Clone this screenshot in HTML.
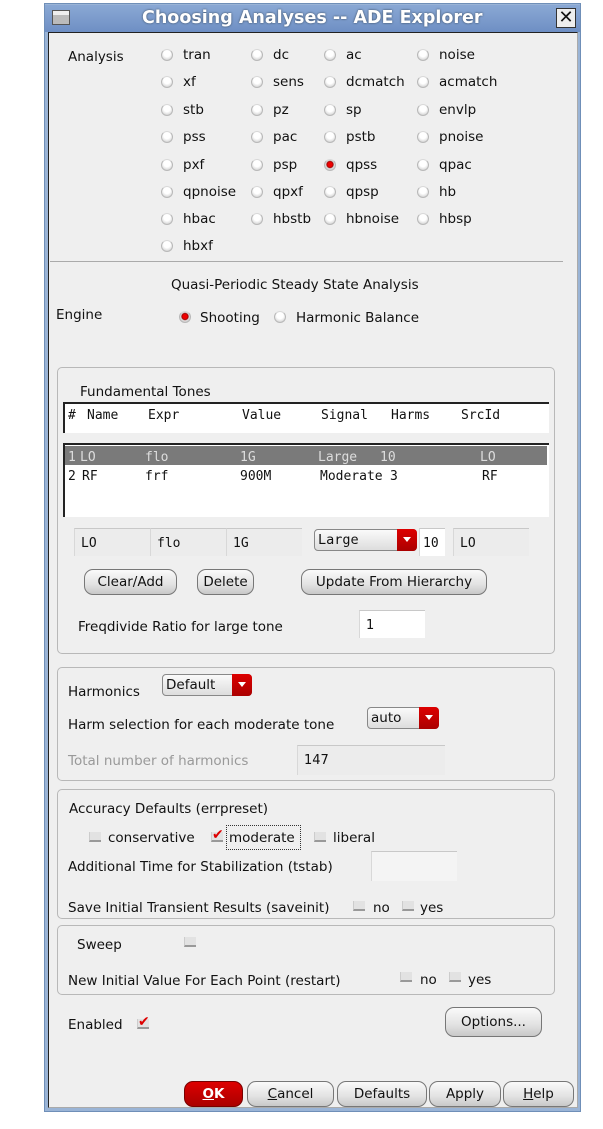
<!DOCTYPE html>
<html><head><meta charset="utf-8"><style>
*{margin:0;padding:0;box-sizing:border-box}
body{width:603px;height:1129px;background:#fff;position:relative;overflow:hidden;font-family:"DejaVu Sans","Liberation Sans",sans-serif;font-size:13.5px;color:#111}
.a{position:absolute;white-space:nowrap;line-height:19px}
.win{position:absolute;left:44px;top:3px;width:537px;height:1109px;background:#9ab4d6;border:1px solid #6f8fb8}
.title{position:absolute;left:45px;top:5px;width:535px;height:27px;background:linear-gradient(#8aa8d4,#6e8fc4);}
.panel{position:absolute;left:48px;top:32px;width:530px;height:1076px;background:#efefef;border:1px solid #222;border-right:1px solid #aaa;border-bottom:1px solid #aaa}
.rd{position:absolute;width:12px;height:12px;border-radius:50%;border:1px solid #b8b8b8;border-top-color:#d8d8d8;background:radial-gradient(circle at 50% 35%,#fff 0 40%,#e0e0e0 70%,#c4c4c4 100%)}
.rd.on{background:radial-gradient(circle at 50% 45%,#e00 0 30%,#900 42%,#ddd 55%,#c4c4c4 100%)}
.box{position:absolute;border:1px solid #b8b8b8;border-radius:5px}
.btn{position:absolute;height:26px;border:1px solid #777;border-radius:9px;background:linear-gradient(#fafafa,#e2e2e2 60%,#c8c8c8);text-align:center;line-height:24px;font-size:13.5px}
.fld{position:absolute;height:28px;background:#ececec;border-top:1px solid #c8c8c8;border-left:1px solid #d8d8d8;font-size:13px;line-height:30px;padding-left:6px}
.mono{font-family:"DejaVu Sans Mono","Liberation Mono",monospace;font-size:13px}
.m{position:absolute;white-space:nowrap;font-family:"DejaVu Sans Mono","Liberation Mono",monospace;font-size:13px;line-height:16px}
.dd{position:absolute;height:22px;border:1px solid #888;border-radius:4px;background:linear-gradient(#fafafa,#ddd);line-height:20px;padding-left:3px;font-size:13.5px}
.dd i{position:absolute;right:-1px;top:-1px;width:20px;height:22px;background:linear-gradient(#d00,#a00);border-radius:0 4px 4px 0}
.dd i:after{content:"";position:absolute;left:6px;top:8px;border-left:4px solid transparent;border-right:4px solid transparent;border-top:5px solid #fff}
.cb{position:absolute;width:12px;height:10px;border-bottom:2px solid #999;border-left:1px solid #ccc;background:#e2e2e2}
.ck:after{content:"✔";position:absolute;left:0;top:-4px;color:#d00;font-size:14px;line-height:14px}
</style></head><body>
<div class="win"></div>
<div class="title"></div>
<div class="a" style="left:52px;top:10px;width:18px;height:15px;border:1px solid #555;background:linear-gradient(#eee 30%,#bbb 30%)"></div>
<div class="a" style="left:142px;top:9px;font-size:17.5px;font-weight:bold;color:#fff;text-shadow:0 0 2px #345">Choosing Analyses -- ADE Explorer</div>
<div class="a" style="left:556px;top:8px;width:20px;height:20px;background:#eee;border:1px solid #333;text-align:center;font-size:18px;line-height:18px;font-weight:bold">✕</div>
<div class="panel"></div>

<div class="a" style="left:68px;top:48px">Analysis</div>
<div class="rd" style="left:161px;top:49px"></div><div class="a" style="left:183px;top:46px">tran</div>
<div class="rd" style="left:251px;top:49px"></div><div class="a" style="left:273px;top:46px">dc</div>
<div class="rd" style="left:324px;top:49px"></div><div class="a" style="left:346px;top:46px">ac</div>
<div class="rd" style="left:417px;top:49px"></div><div class="a" style="left:439px;top:46px">noise</div>
<div class="rd" style="left:161px;top:76px"></div><div class="a" style="left:183px;top:73px">xf</div>
<div class="rd" style="left:251px;top:76px"></div><div class="a" style="left:273px;top:73px">sens</div>
<div class="rd" style="left:324px;top:76px"></div><div class="a" style="left:346px;top:73px">dcmatch</div>
<div class="rd" style="left:417px;top:76px"></div><div class="a" style="left:439px;top:73px">acmatch</div>
<div class="rd" style="left:161px;top:104px"></div><div class="a" style="left:183px;top:101px">stb</div>
<div class="rd" style="left:251px;top:104px"></div><div class="a" style="left:273px;top:101px">pz</div>
<div class="rd" style="left:324px;top:104px"></div><div class="a" style="left:346px;top:101px">sp</div>
<div class="rd" style="left:417px;top:104px"></div><div class="a" style="left:439px;top:101px">envlp</div>
<div class="rd" style="left:161px;top:131px"></div><div class="a" style="left:183px;top:128px">pss</div>
<div class="rd" style="left:251px;top:131px"></div><div class="a" style="left:273px;top:128px">pac</div>
<div class="rd" style="left:324px;top:131px"></div><div class="a" style="left:346px;top:128px">pstb</div>
<div class="rd" style="left:417px;top:131px"></div><div class="a" style="left:439px;top:128px">pnoise</div>
<div class="rd" style="left:161px;top:159px"></div><div class="a" style="left:183px;top:156px">pxf</div>
<div class="rd" style="left:251px;top:159px"></div><div class="a" style="left:273px;top:156px">psp</div>
<div class="rd on" style="left:324px;top:159px"></div><div class="a" style="left:346px;top:156px">qpss</div>
<div class="rd" style="left:417px;top:159px"></div><div class="a" style="left:439px;top:156px">qpac</div>
<div class="rd" style="left:161px;top:186px"></div><div class="a" style="left:183px;top:183px">qpnoise</div>
<div class="rd" style="left:251px;top:186px"></div><div class="a" style="left:273px;top:183px">qpxf</div>
<div class="rd" style="left:324px;top:186px"></div><div class="a" style="left:346px;top:183px">qpsp</div>
<div class="rd" style="left:417px;top:186px"></div><div class="a" style="left:439px;top:183px">hb</div>
<div class="rd" style="left:161px;top:213px"></div><div class="a" style="left:183px;top:210px">hbac</div>
<div class="rd" style="left:251px;top:213px"></div><div class="a" style="left:273px;top:210px">hbstb</div>
<div class="rd" style="left:324px;top:213px"></div><div class="a" style="left:346px;top:210px">hbnoise</div>
<div class="rd" style="left:417px;top:213px"></div><div class="a" style="left:439px;top:210px">hbsp</div>
<div class="rd" style="left:161px;top:240px"></div><div class="a" style="left:183px;top:237px">hbxf</div>

<div class="a" style="left:50px;top:261px;width:513px;height:1px;background:#aaa"></div>
<div class="a" style="left:171px;top:276px">Quasi-Periodic Steady State Analysis</div>
<div class="a" style="left:56px;top:306px">Engine</div>
<div class="rd on" style="left:179px;top:311px"></div><div class="a" style="left:200px;top:309px">Shooting</div>
<div class="rd" style="left:274px;top:311px"></div><div class="a" style="left:296px;top:309px">Harmonic Balance</div>

<div class="box" style="left:57px;top:367px;width:498px;height:287px"></div>
<div class="a" style="left:80px;top:383px">Fundamental Tones</div>
<div class="a" style="left:63px;top:402px;width:486px;height:31px;background:#fff;border-top:2px solid #222;border-left:2px solid #222"></div>
<div class="m" style="left:68px;top:408px">#</div><div class="m" style="left:87px;top:408px">Name</div><div class="m" style="left:148px;top:408px">Expr</div><div class="m" style="left:242px;top:408px">Value</div><div class="m" style="left:321px;top:408px">Signal</div><div class="m" style="left:391px;top:408px">Harms</div><div class="m" style="left:461px;top:408px">SrcId</div>
<div class="a" style="left:63px;top:443px;width:486px;height:74px;background:#fff;border-top:2px solid #222;border-left:2px solid #222"></div>
<div class="a" style="left:65px;top:446px;width:482px;height:19px;background:#7a7a7a"></div>
<div style="color:#ddd"><div class="m" style="left:68px;top:450px">1</div><div class="m" style="left:80px;top:450px">LO</div><div class="m" style="left:145px;top:450px">flo</div><div class="m" style="left:240px;top:450px">1G</div><div class="m" style="left:318px;top:450px">Large</div><div class="m" style="left:380px;top:450px">10</div><div class="m" style="left:480px;top:450px">LO</div></div>
<div class="m" style="left:68px;top:469px">2</div><div class="m" style="left:82px;top:469px">RF</div><div class="m" style="left:145px;top:469px">frf</div><div class="m" style="left:240px;top:469px">900M</div><div class="m" style="left:320px;top:469px">Moderate</div><div class="m" style="left:390px;top:469px">3</div><div class="m" style="left:482px;top:469px">RF</div>
<div class="fld mono" style="left:74px;top:528px;width:76px">LO</div>
<div class="fld mono" style="left:150px;top:528px;width:76px">flo</div>
<div class="fld mono" style="left:226px;top:528px;width:76px">1G</div>
<div class="dd mono" style="left:314px;top:529px;width:103px">Large<i></i></div>
<div class="fld mono" style="left:419px;top:528px;width:26px;background:#fff;padding-left:3px">10</div>
<div class="fld mono" style="left:453px;top:528px;width:76px">LO</div>
<div class="btn" style="left:84px;top:569px;width:93px">Clear/Add</div>
<div class="btn" style="left:197px;top:569px;width:57px">Delete</div>
<div class="btn" style="left:301px;top:569px;width:186px">Update From Hierarchy</div>
<div class="a" style="left:78px;top:618px">Freqdivide Ratio for large tone</div>
<div class="fld" style="left:359px;top:610px;width:66px;background:#fff">1</div>

<div class="box" style="left:57px;top:667px;width:498px;height:114px"></div>
<div class="a" style="left:68px;top:683px">Harmonics</div>
<div class="dd" style="left:162px;top:674px;width:90px">Default<i></i></div>
<div class="a" style="left:68px;top:716px">Harm selection for each moderate tone</div>
<div class="dd" style="left:367px;top:707px;width:72px">auto<i></i></div>
<div class="a" style="left:68px;top:752px;color:#999">Total number of harmonics</div>
<div class="fld" style="left:297px;top:745px;width:148px;height:30px">147</div>

<div class="box" style="left:57px;top:789px;width:498px;height:130px"></div>
<div class="a" style="left:69px;top:800px">Accuracy Defaults (errpreset)</div>
<div class="cb" style="left:89px;top:832px"></div><div class="a" style="left:108px;top:829px">conservative</div>
<div class="cb ck" style="left:211px;top:832px"></div>
<div class="a" style="left:226px;top:825px;width:75px;height:25px;border:1px dotted #333"></div>
<div class="a" style="left:229px;top:829px">moderate</div>
<div class="cb" style="left:314px;top:832px"></div><div class="a" style="left:333px;top:829px">liberal</div>
<div class="a" style="left:68px;top:858px">Additional Time for Stabilization (tstab)</div>
<div class="fld" style="left:371px;top:851px;width:86px;height:30px;background:#f4f4f4"></div>
<div class="a" style="left:68px;top:899px">Save Initial Transient Results (saveinit)</div>
<div class="cb" style="left:353px;top:901px"></div><div class="a" style="left:373px;top:899px">no</div>
<div class="cb" style="left:402px;top:901px"></div><div class="a" style="left:420px;top:899px">yes</div>

<div class="box" style="left:57px;top:925px;width:498px;height:70px"></div>
<div class="a" style="left:77px;top:936px">Sweep</div>
<div class="cb" style="left:184px;top:937px"></div>
<div class="a" style="left:68px;top:972px">New Initial Value For Each Point (restart)</div>
<div class="cb" style="left:400px;top:972px"></div><div class="a" style="left:420px;top:971px">no</div>
<div class="cb" style="left:449px;top:972px"></div><div class="a" style="left:468px;top:971px">yes</div>

<div class="a" style="left:68px;top:1016px">Enabled</div>
<div class="cb ck" style="left:137px;top:1019px"></div>
<div class="btn" style="left:445px;top:1007px;width:97px;height:30px;line-height:28px">Options...</div>

<div class="btn" style="left:184px;top:1081px;width:59px;background:linear-gradient(#d00,#a00);color:#fff;font-weight:bold;border-color:#700"><u>O</u>K</div>
<div class="btn" style="left:247px;top:1081px;width:87px"><u>C</u>ancel</div>
<div class="btn" style="left:337px;top:1081px;width:90px">Defaults</div>
<div class="btn" style="left:429px;top:1081px;width:72px">Apply</div>
<div class="btn" style="left:503px;top:1081px;width:71px"><u>H</u>elp</div>
</body></html>
